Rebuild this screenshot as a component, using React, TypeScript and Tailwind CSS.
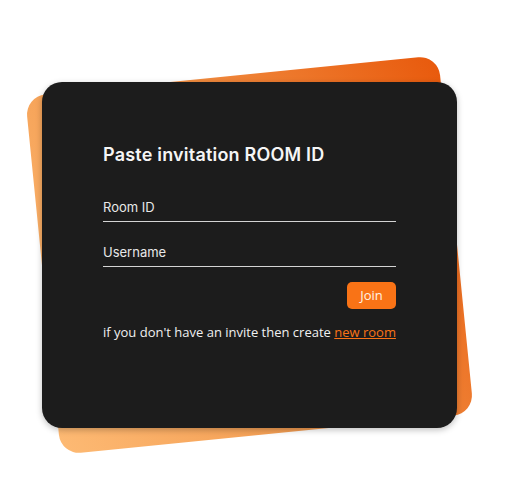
import React from "react";

export default function App() {
  return (
    <div className="min-h-[490px] w-[509px] bg-white pl-[42px] pt-[82px]">
      <div className="relative w-[415px] h-[346px]">
        <div className="absolute left-0 top-[-7px] w-[415px] h-[360px] -rotate-[5.7deg] rounded-[20px] bg-[linear-gradient(65deg,#fdba74_0%,#f39a4e_45%,#e8590c_100%)]" />
        <div className="relative h-full w-full rounded-[20px] bg-[#1c1c1c] shadow-[0_2px_6px_rgba(0,0,0,0.25)] px-[61px] pt-[60px]" style={{ fontFamily: "Inter, 'Open Sans', sans-serif" }}>
          <h1 className="text-[18px] font-semibold text-[#f5f5f5] leading-[26px] tracking-[0.2px]">Paste invitation ROOM ID</h1>
          <div className="mt-[29px] border-b border-[#d4d4d4] pb-[4px]">
            <div className="text-[13px] text-[#e8e8e8] leading-[20px]">Room ID</div>
          </div>
          <div className="mt-[20px] border-b border-[#d4d4d4] pb-[4px]">
            <div className="text-[13px] text-[#e8e8e8] leading-[20px]">Username</div>
          </div>
          <div className="mt-[15px] flex justify-end">
            <button className="h-[27px] w-[49px] rounded-[5px] bg-[#f97316] text-[13px] text-[#fff3e6]" style={{ fontFamily: "'Open Sans', sans-serif" }}>Join</button>
          </div>
          <p className="mt-[13px] text-[13px] leading-[20px] text-[#f0f0f0] whitespace-nowrap" style={{ fontFamily: "'Open Sans', sans-serif" }}>
            if you don't have an invite then create <span className="text-[#f97316] underline">new room</span>
          </p>
        </div>
      </div>
    </div>
  );
}
